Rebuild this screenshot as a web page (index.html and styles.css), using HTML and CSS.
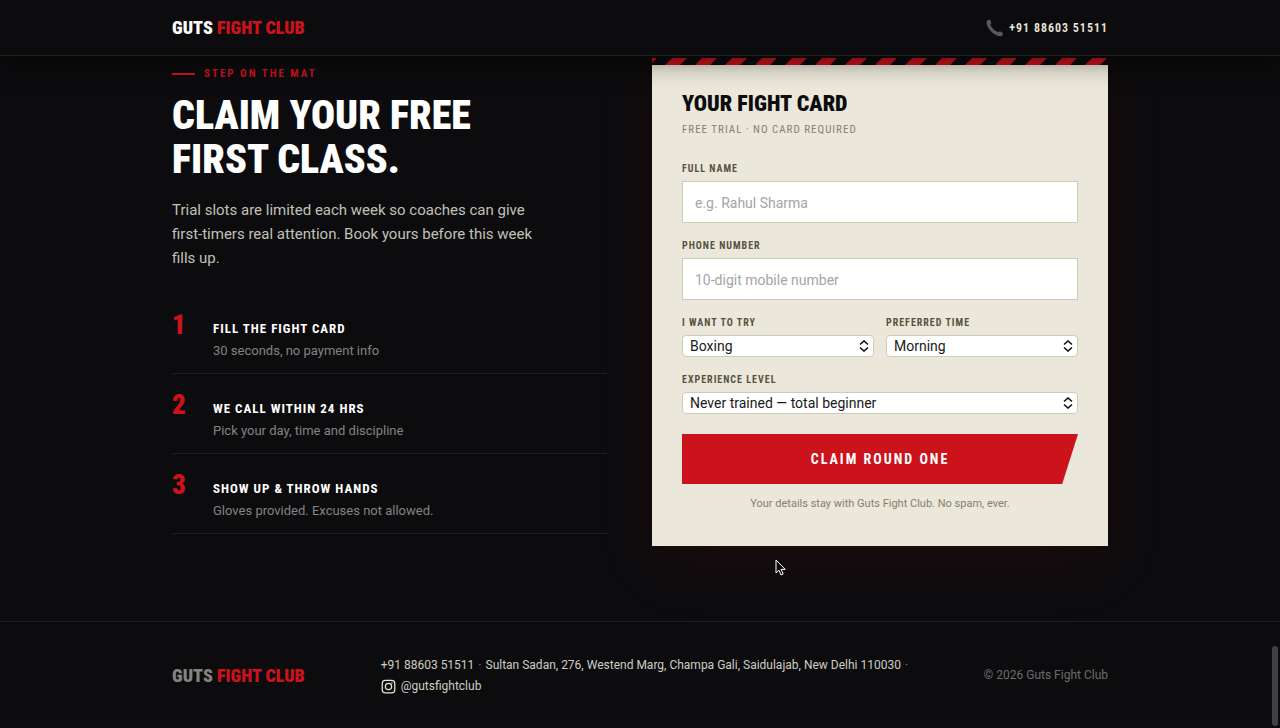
FILE: index.html
```html
<!DOCTYPE html>
<html lang="en">
<head>
  <meta charset="UTF-8">
  <meta name="viewport" content="width=device-width, initial-scale=1.0">
  <title>Guts Fight Club</title>
  <link rel="stylesheet" href="styles.css">
</head>
<body>
  <header class="site-header">
    <div class="container header-inner">
      <a href="#" class="logo">GUTS <span>FIGHT CLUB</span></a>
      <a href="tel:+918860351511" class="header-phone">
        <svg class="phone-icon" viewBox="0 0 18 18" aria-hidden="true">
          <path d="M1.2 1.6 C2.6 0.2 4.4 0.8 5 2.6 C5.5 4 5.2 4.8 4.3 5.6 C5.4 8.6 9 12 12.2 13.3 C13 12.4 14 12.2 15.4 12.9 C17.2 13.8 17.6 15.2 16.3 16.4 C14.6 17.8 12 17.4 9 15.6 C5.4 13.4 2.6 10.2 1.2 6.8 C0.3 4.6 0.2 2.8 1.2 1.6 Z"/>
        </svg>
        +91 88603 51511
      </a>
    </div>
  </header>

  <main class="trial" id="trial">
    <div class="container trial-grid">
      <!-- Intro + steps -->
      <div class="trial-copy">
        <p class="eyebrow">Step on the mat</p>
        <h2>Claim your free<br>first class.</h2>
        <p class="lead">Trial slots are limited each week so coaches can give first-timers real attention. Book yours before this week fills up.</p>
        <ol class="steps">
          <li>
            <span class="num">1</span>
            <div>
              <h3>Fill the fight card</h3>
              <p>30 seconds, no payment info</p>
            </div>
          </li>
          <li>
            <span class="num">2</span>
            <div>
              <h3>We call within 24 hrs</h3>
              <p>Pick your day, time and discipline</p>
            </div>
          </li>
          <li>
            <span class="num">3</span>
            <div>
              <h3>Show up &amp; throw hands</h3>
              <p>Gloves provided. Excuses not allowed.</p>
            </div>
          </li>
        </ol>
      </div>

      <!-- Fight card form -->
      <form class="fight-card">
        <svg class="tape" aria-hidden="true">
          <pattern id="tape" width="30" height="7" patternUnits="userSpaceOnUse">
            <rect width="30" height="7" fill="#0b0b0d"/>
            <path d="M13 7 L20 0 H35 L28 7 Z M-17 7 L-10 0 H5 L-2 7 Z" fill="#cc131c"/>
          </pattern>
          <rect width="100%" height="7" fill="url(#tape)"/>
        </svg>
        <div class="card-body">
          <h3>Your fight card</h3>
          <p class="card-sub">Free trial · No card required</p>

          <div class="field">
            <label for="name">Full name</label>
            <input type="text" id="name" placeholder="e.g. Rahul Sharma">
          </div>
          <div class="field">
            <label for="phone">Phone number</label>
            <input type="tel" id="phone" placeholder="10-digit mobile number">
          </div>
          <div class="field-row">
            <div class="field">
              <label for="discipline">I want to try</label>
              <div class="select-wrap">
                <select id="discipline">
                  <option>Boxing</option>
                  <option>MMA</option>
                </select>
                <svg viewBox="0 0 10 12" aria-hidden="true"><path d="M1 4.5 L5 1 L9 4.5 M1 7.5 L5 11 L9 7.5"/></svg>
              </div>
            </div>
            <div class="field">
              <label for="time">Preferred time</label>
              <div class="select-wrap">
                <select id="time">
                  <option>Morning</option>
                  <option>Evening</option>
                </select>
                <svg viewBox="0 0 10 12" aria-hidden="true"><path d="M1 4.5 L5 1 L9 4.5 M1 7.5 L5 11 L9 7.5"/></svg>
              </div>
            </div>
          </div>
          <div class="field">
            <label for="level">Experience level</label>
            <div class="select-wrap">
              <select id="level">
                <option>Never trained — total beginner</option>
                <option>Some training</option>
              </select>
              <svg viewBox="0 0 10 12" aria-hidden="true"><path d="M1 4.5 L5 1 L9 4.5 M1 7.5 L5 11 L9 7.5"/></svg>
            </div>
          </div>
          <button type="button" class="submit">Claim round one</button>
          <p class="note">Your details stay with Guts Fight Club. No spam, ever.</p>
        </div>
      </form>
    </div>
  </main>

  <footer class="site-footer">
    <div class="container footer-inner">
      <a href="#" class="logo logo-muted">GUTS <span>FIGHT CLUB</span></a>
      <div class="contact">
        <div class="contact-line">
          <a href="tel:+918860351511">+91 88603 51511</a>
          <i>·</i>
          <a href="#">Sultan Sadan, 276, Westend Marg, Champa Gali, Saidulajab, New Delhi 110030</a>
          <i>·</i>
        </div>
        <a href="#" class="insta">
          <svg viewBox="0 0 24 24" aria-hidden="true">
            <rect x="2" y="2" width="20" height="20" rx="5"/>
            <circle cx="12" cy="12" r="5"/>
            <circle class="dot" cx="17.5" cy="6.5" r="1.2"/>
          </svg>
          @gutsfightclub
        </a>
      </div>
      <p class="copyright">© 2026 Guts Fight Club</p>
    </div>
  </footer>

  <div class="scroll-thumb"></div>
  <svg class="cursor" viewBox="0 0 12 18" aria-hidden="true">
    <path d="M1 1 V14 L4 11.2 L6 16 L8.2 15 L6.2 10.4 H10.2 Z"/>
  </svg>
</body>
</html>
```
FILE: styles.css
```css
:root {
  --ink: #0c0c0e;
  --red: #cc131c;
  --bone: #ebe7da;
  --line: #1e1e21;
  --body: Roboto, "Liberation Sans", sans-serif;
  --cond: "Roboto Condensed", "Liberation Sans Narrow", Roboto, sans-serif;
}

* {
  box-sizing: border-box;
  margin: 0;
  padding: 0;
}

html {
  scrollbar-width: none;
}

body {
  background: var(--ink);
  color: #fff;
  font-family: var(--body);
  font-size: 14px;
  min-height: 100vh;
}

a {
  color: inherit;
  text-decoration: none;
}

.container {
  max-width: 976px;
  margin: 0 auto;
  padding: 0 20px;
}

/* Header */
.site-header {
  position: sticky;
  top: 0;
  z-index: 10;
  background: var(--ink);
  border-bottom: 1px solid var(--line);
  box-shadow: 0 6px 24px rgba(0, 0, 0, 0.5);
}

.header-inner {
  display: flex;
  align-items: center;
  justify-content: space-between;
  height: 55px;
}

.logo {
  font-family: var(--cond);
  font-size: 18px;
  font-weight: 900;
  white-space: nowrap;
}

.logo span {
  color: var(--red);
}

.logo-muted {
  color: #85837e;
}

.header-phone {
  display: flex;
  align-items: center;
  gap: 5px;
  color: var(--bone);
  font-family: var(--cond);
  font-size: 12px;
  font-weight: 600;
  letter-spacing: 1px;
}

.phone-icon {
  width: 18px;
  height: 18px;
  fill: #58585a;
}

/* Trial section */
.trial {
  padding: 2px 0 75px;
}

.trial-grid {
  display: grid;
  grid-template-columns: 435fr 456fr;
  gap: 45px;
}

.trial-copy {
  padding-top: 8px;
}

.eyebrow {
  display: flex;
  align-items: center;
  gap: 9px;
  color: var(--red);
  font-family: var(--cond);
  font-size: 11px;
  font-weight: 700;
  line-height: 16px;
  letter-spacing: 2px;
  text-transform: uppercase;
}

.eyebrow::before {
  content: "";
  width: 23px;
  height: 2px;
  background: var(--red);
}

h2 {
  margin-top: 12px;
  font-family: var(--cond);
  font-size: 40px;
  font-weight: 900;
  line-height: 44px;
  text-transform: uppercase;
}

.lead {
  max-width: 380px;
  margin-top: 16px;
  color: #c3c0b7;
  font-size: 15px;
  line-height: 24px;
}

.steps {
  margin-top: 24px;
  list-style: none;
}

.steps li {
  display: grid;
  grid-template-columns: 27px 1fr;
  gap: 14px;
  height: 80px;
  padding-top: 16px;
  border-bottom: 1px solid var(--line);
}

.num {
  color: var(--red);
  font-family: var(--cond);
  font-size: 27px;
  font-weight: 900;
  line-height: 30px;
}

.steps h3 {
  padding-top: 9px;
  font-family: var(--cond);
  font-size: 13px;
  line-height: 20px;
  letter-spacing: 1px;
  text-transform: uppercase;
}

.steps p {
  color: #85837e;
  font-size: 13px;
  line-height: 24px;
}

/* Form card */
.fight-card {
  background: var(--bone);
  color: var(--ink);
  box-shadow: 0 20px 60px rgba(204, 19, 28, 0.08);
}

.tape {
  display: block;
  width: 100%;
  height: 7px;
}

.card-body {
  padding: 23px 30px 34px;
}

.card-body h3 {
  font-family: var(--cond);
  font-size: 22px;
  font-weight: 900;
  line-height: 32px;
  text-transform: uppercase;
}

.card-sub {
  margin-bottom: 21px;
  color: #85816f;
  font-family: var(--cond);
  font-size: 11px;
  line-height: 20px;
  letter-spacing: 1px;
  text-transform: uppercase;
}

.field {
  margin-bottom: 15px;
}

.field-row {
  display: grid;
  grid-template-columns: 1fr 1fr;
  gap: 12px;
}

label {
  display: block;
  margin-bottom: 5px;
  color: #56523f;
  font-family: var(--cond);
  font-size: 10px;
  font-weight: 700;
  line-height: 15px;
  letter-spacing: 1px;
  text-transform: uppercase;
}

input,
select {
  display: block;
  width: 100%;
  background: #fff;
  border: 1px solid #cfcbbb;
  color: #1a1a1a;
  font-family: var(--body);
  font-size: 14px;
}

input {
  height: 42px;
  padding: 2px 12px 0;
}

input::placeholder {
  color: #a5a5a5;
}

.select-wrap {
  position: relative;
}

.select-wrap svg {
  position: absolute;
  top: 5px;
  right: 5px;
  width: 10px;
  height: 12px;
  fill: none;
  stroke: #111;
  stroke-width: 1.6;
  pointer-events: none;
}

select {
  appearance: none;
  height: 22px;
  padding: 0 7px;
  border-radius: 4px;
}

.submit {
  display: block;
  width: 100%;
  height: 50px;
  margin-top: 20px;
  background: var(--red);
  border: none;
  clip-path: polygon(0 0, 100% 0, 96% 100%, 0 100%);
  color: #fff;
  font-family: var(--cond);
  font-size: 14px;
  font-weight: 700;
  letter-spacing: 2px;
  text-transform: uppercase;
  cursor: pointer;
}

.note {
  margin-top: 12px;
  color: #85816f;
  font-size: 11px;
  line-height: 16px;
  text-align: center;
}

/* Footer */
.site-footer {
  border-top: 1px solid var(--line);
}

.footer-inner {
  display: flex;
  align-items: center;
  justify-content: space-between;
  min-height: 106px;
}

.contact {
  padding-top: 2px;
  color: #cfccc2;
  font-size: 12px;
  line-height: 21px;
}

.contact-line {
  display: flex;
  gap: 4px;
}

.contact i {
  color: #85837e;
  font-style: normal;
}

.insta {
  display: flex;
  align-items: center;
  gap: 5px;
}

.insta svg {
  width: 15px;
  height: 15px;
  fill: none;
  stroke: #ebe7da;
  stroke-width: 2;
}

.insta .dot {
  fill: #ebe7da;
  stroke: none;
}

.copyright {
  color: #6d6c69;
  font-size: 12px;
}

/* Overlays */
.scroll-thumb {
  position: fixed;
  right: 2px;
  bottom: 2px;
  width: 6px;
  height: 80px;
  border-radius: 3px;
  background: #414143;
}

.cursor {
  position: absolute;
  top: 559px;
  left: 775px;
  width: 12px;
  height: 18px;
  fill: #0b0b0d;
  stroke: #fff;
}
```
